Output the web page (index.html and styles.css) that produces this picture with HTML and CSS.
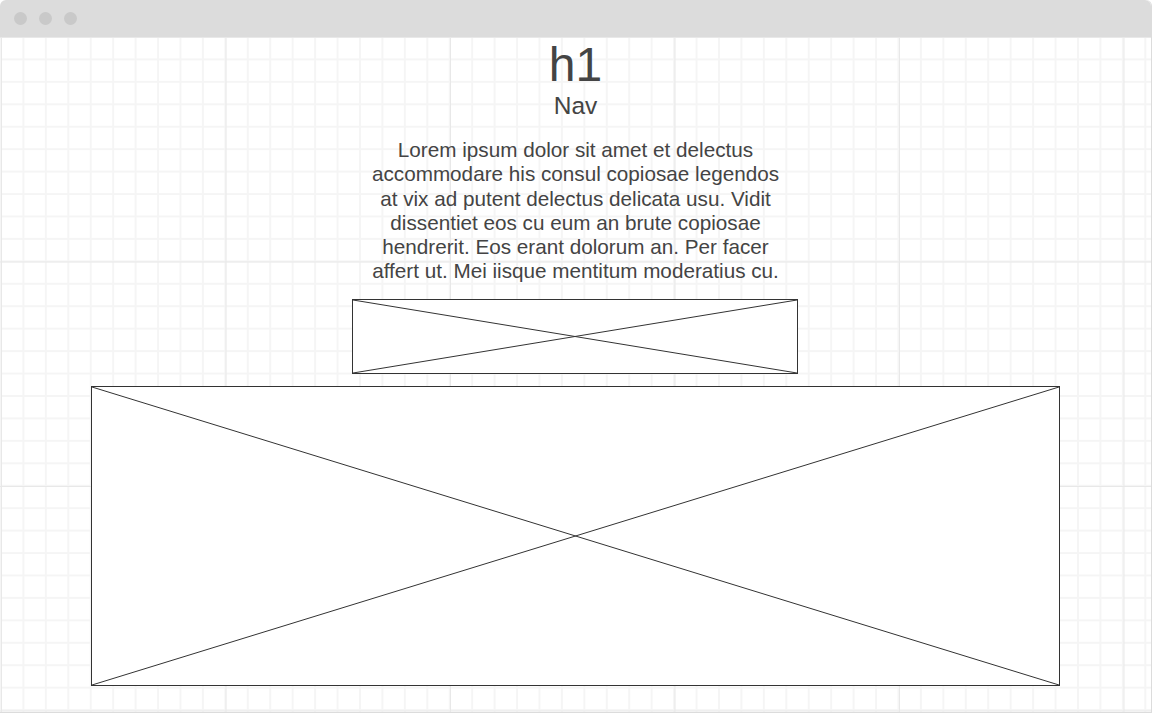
FILE: index.html
```html
<!DOCTYPE html>
<html lang="en">
<head>
    <meta charset="UTF-8">
    <meta name="viewport" content="width=device-width, initial-scale=1.0">
    <title>Wireframe</title>
    <link rel="stylesheet" href="styles.css">
</head>
<body>

    <div class="window">
        <div class="titlebar">
            <span class="dot"></span>
            <span class="dot"></span>
            <span class="dot"></span>
        </div>

        <div class="canvas">
            <h1 class="title">h1</h1>
            <div class="nav">Nav</div>
            <p class="text">Lorem ipsum dolor sit amet et delectus accommodare his consul copiosae legendos at vix ad putent delectus delicata usu. Vidit dissentiet eos cu eum an brute copiosae hendrerit. Eos erant dolorum an. Per facer affert ut. Mei iisque mentitum moderatius cu.</p>

            <div class="placeholder small">
                <svg viewBox="0 0 100 100" preserveAspectRatio="none">
                    <line x1="0" y1="0" x2="100" y2="100" vector-effect="non-scaling-stroke"/>
                    <line x1="100" y1="0" x2="0" y2="100" vector-effect="non-scaling-stroke"/>
                </svg>
            </div>

            <div class="placeholder large">
                <svg viewBox="0 0 100 100" preserveAspectRatio="none">
                    <line x1="0" y1="0" x2="100" y2="100" vector-effect="non-scaling-stroke"/>
                    <line x1="100" y1="0" x2="0" y2="100" vector-effect="non-scaling-stroke"/>
                </svg>
            </div>
        </div>
    </div>

</body>
</html>
```

FILE: styles.css
```css
body {
    margin: 0;
    background: white;
    font-family: "Liberation Sans", Arial, sans-serif;
    color: #444;
}
.window {
    width: 1151px;
    height: 712px;
    border-right: 1px solid #dcdcdc;
    border-bottom: 1px solid #dcdcdc;
    border-top-right-radius: 6px;
    display: flex;
    flex-direction: column;
}
.titlebar {
    height: 37px;
    flex-shrink: 0;
    background: #dcdcdc;
    border-radius: 6px 6px 0 0;
    display: flex;
    align-items: center;
    gap: 12px;
    padding-left: 14px;
}
.dot {
    width: 13px;
    height: 13px;
    border-radius: 50%;
    background: #c9c9c9;
}
.canvas {
    flex: 1;
    display: flex;
    flex-direction: column;
    align-items: center;
    background-color: white;
    background-image:
        linear-gradient(to right, #e8e8e8 1px, transparent 1px),
        linear-gradient(to bottom, #e8e8e8 1px, transparent 1px),
        linear-gradient(to right, #f5f5f5 2px, transparent 2px),
        linear-gradient(to bottom, #f5f5f5 2px, transparent 2px);
    background-size: 224.5px 224.5px, 224.5px 224.5px, 22.45px 22.45px, 22.45px 22.45px;
    background-position: 1px 0, 1px 0, 0 -1px, 0 -1px;
}
.title {
    margin: 4px 0 0;
    font-size: 48px;
    line-height: 48px;
    font-weight: normal;
}
.nav {
    margin-top: 4px;
    font-size: 24.5px;
    line-height: 26px;
}
.text {
    width: 418px;
    margin: 19px 0 0;
    font-size: 20.7px;
    line-height: 24.3px;
    text-align: center;
}
.placeholder {
    box-sizing: border-box;
    border: 1px solid #333;
    background: white;
    flex-shrink: 0;
}
.placeholder svg {
    display: block;
    width: 100%;
    height: 100%;
}
.placeholder line {
    stroke: #333;
    stroke-width: 1;
}
.small {
    width: 446px;
    height: 75px;
    margin: 15px 1px 0 0;
}
.large {
    width: 969px;
    height: 300px;
    margin-top: 12px;
}
```
